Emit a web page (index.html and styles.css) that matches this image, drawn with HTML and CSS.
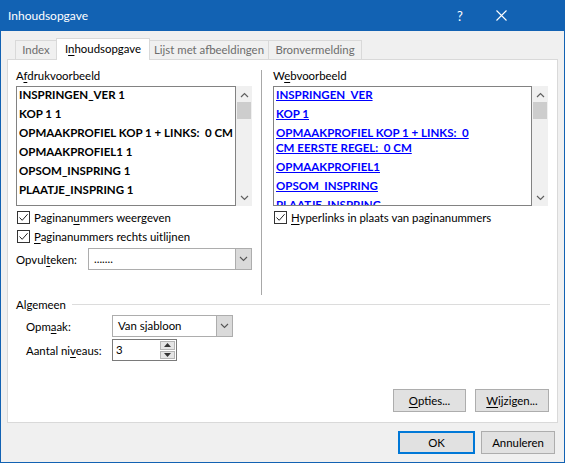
FILE: index.html
```html
<!DOCTYPE html>
<html lang="nl">
<head>
<meta charset="utf-8">
<title>Inhoudsopgave</title>
<link rel="stylesheet" href="styles.css">
</head>
<body>
<div class="window">
  <div class="titlebar">
    <span class="title">Inhoudsopgave</span>
    <span class="help">?</span>
    <svg class="close" width="11" height="11" viewBox="0 0 11 11"><path d="M0.5 0.5 L10.5 10.5 M10.5 0.5 L0.5 10.5" stroke="#fff" stroke-width="1.1" fill="none"/></svg>
  </div>
  <div class="body">
    <div class="tabs">
      <div class="tab tab-index">Index</div>
      <div class="tab tab-toc active">I<u>n</u>houdsopgave</div>
      <div class="tab tab-lijst">Lijst met afbeeldingen</div>
      <div class="tab tab-bron">Bronvermelding</div>
    </div>
    <div class="panel">
      <div class="columns">
        <div class="col col-left">
          <div class="label">A<u>f</u>drukvoorbeeld</div>
          <div class="preview">
            <div class="listbox listbox-left">
              <div class="item">INSPRINGEN_VER 1</div>
              <div class="item">KOP 1 1</div>
              <div class="item">OPMAAKPROFIEL KOP 1 + LINKS:&nbsp; 0 CM</div>
              <div class="item">OPMAAKPROFIEL1 1</div>
              <div class="item">OPSOM_INSPRING 1</div>
              <div class="item">PLAATJE_INSPRING 1</div>
              <div class="item">PREFIX VAN HET SJABLOON 1</div>
            </div>
            <div class="scrollbar">
              <svg class="sarrow" width="9" height="6" viewBox="0 0 9 6"><path d="M1 5 L4.5 1.5 L8 5" stroke="#606060" stroke-width="1.2" fill="none"/></svg>
              <div class="thumb"></div>
              <div class="track"></div>
              <svg class="sarrow" width="9" height="6" viewBox="0 0 9 6"><path d="M1 1 L4.5 4.5 L8 1" stroke="#606060" stroke-width="1.2" fill="none"/></svg>
            </div>
          </div>
          <div class="check">
            <span class="box"><svg width="11" height="11" viewBox="0 0 11 11"><path d="M1.5 5.5 L4.2 8.3 L9.6 2.2" stroke="#222" stroke-width="1" fill="none"/></svg></span>
            <span>Paginan<u>u</u>mmers weergeven</span>
          </div>
          <div class="check">
            <span class="box"><svg width="11" height="11" viewBox="0 0 11 11"><path d="M1.5 5.5 L4.2 8.3 L9.6 2.2" stroke="#222" stroke-width="1" fill="none"/></svg></span>
            <span><u>P</u>aginanummers rechts uitlijnen</span>
          </div>
          <div class="field">
            <span class="field-label">Opvul<u>t</u>eken:</span>
            <div class="combo combo-wide">
              <span class="combo-text">.......</span>
              <span class="combo-btn"><svg width="9" height="6" viewBox="0 0 9 6"><path d="M1 1 L4.5 4.5 L8 1" stroke="#555" stroke-width="1.1" fill="none"/></svg></span>
            </div>
          </div>
        </div>
        <div class="vsep"></div>
        <div class="col col-right">
          <div class="label">W<u>e</u>bvoorbeeld</div>
          <div class="preview">
            <div class="listbox listbox-right">
              <div class="item link">INSPRINGEN_VER</div>
              <div class="item link">KOP 1</div>
              <div class="item link">OPMAAKPROFIEL KOP 1 + LINKS:&nbsp; 0<br>CM EERSTE REGEL:&nbsp; 0 CM</div>
              <div class="item link">OPMAAKPROFIEL1</div>
              <div class="item link">OPSOM_INSPRING</div>
              <div class="item link">PLAATJE_INSPRING</div>
            </div>
            <div class="scrollbar">
              <svg class="sarrow" width="9" height="6" viewBox="0 0 9 6"><path d="M1 5 L4.5 1.5 L8 5" stroke="#606060" stroke-width="1.2" fill="none"/></svg>
              <div class="thumb"></div>
              <div class="track"></div>
              <svg class="sarrow" width="9" height="6" viewBox="0 0 9 6"><path d="M1 1 L4.5 4.5 L8 1" stroke="#606060" stroke-width="1.2" fill="none"/></svg>
            </div>
          </div>
          <div class="check">
            <span class="box"><svg width="11" height="11" viewBox="0 0 11 11"><path d="M1.5 5.5 L4.2 8.3 L9.6 2.2" stroke="#222" stroke-width="1" fill="none"/></svg></span>
            <span><u>H</u>yperlinks in plaats van paginanummers</span>
          </div>
        </div>
      </div>
      <div class="group">
        <div class="group-title"><span>Algemeen</span><div class="hline"></div></div>
        <div class="grow">
          <span class="grow-label">Opm<u>a</u>ak:</span>
          <div class="combo combo-mid">
            <span class="combo-text">Van sjabloon</span>
            <span class="combo-btn"><svg width="9" height="6" viewBox="0 0 9 6"><path d="M1 1 L4.5 4.5 L8 1" stroke="#555" stroke-width="1.1" fill="none"/></svg></span>
          </div>
        </div>
        <div class="grow">
          <span class="grow-label">Aantal ni<u>v</u>eaus:</span>
          <div class="spinner">
            <span class="spin-text">3</span>
            <span class="spin-btns">
              <span class="spin-btn"><svg width="7" height="4" viewBox="0 0 7 4"><path d="M0 4 L3.5 0 L7 4 Z" fill="#333"/></svg></span>
              <span class="spin-btn"><svg width="7" height="4" viewBox="0 0 7 4"><path d="M0 0 L3.5 4 L7 0 Z" fill="#333"/></svg></span>
            </span>
          </div>
        </div>
      </div>
      <div class="panel-buttons">
        <div class="btn btn-opties"><u>O</u>pties...</div>
        <div class="btn btn-wijzigen"><u>W</u>ijzigen...</div>
      </div>
    </div>
    <div class="dialog-buttons">
      <div class="btn btn-ok">OK</div>
      <div class="btn btn-cancel">Annuleren</div>
    </div>
  </div>
</div>
</body>
</html>
```
FILE: styles.css
```css
* { box-sizing: border-box; }
html, body { margin: 0; padding: 0; }
body {
  width: 565px;
  height: 463px;
  overflow: hidden;
  font-family: Lato, "Noto Sans", sans-serif;
  font-size: 11.4px;
  color: #000;
  background: #f0f0f0;
}
u { text-decoration: underline; text-underline-offset: 2px; }

.window {
  width: 565px;
  height: 463px;
  border: 1px solid #1262b3;
  border-top: none;
  background: #f0f0f0;
  display: flex;
  flex-direction: column;
}

.titlebar {
  height: 31px;
  margin: 0 -1px;
  background: #1262b3;
  color: #fff;
  display: flex;
  align-items: center;
  padding-left: 8px;
  font-size: 12px;
}
.title { flex: 1; }
.help { width: 10px; text-align: center; font-size: 13px; margin-right: 31px; }
.close { margin-right: 58px; }

.body {
  flex: 1;
  padding: 7px 6px 0 6px;
  display: flex;
  flex-direction: column;
}

.tabs {
  display: flex;
  align-items: flex-end;
  height: 21px;
  padding-left: 9px;
}
.tab {
  height: 19px;
  border: 1px solid #d9d9d9;
  border-bottom: none;
  margin-left: -1px;
  line-height: 17px;
  text-align: center;
  color: #6d6d6d;
  background: #f0f0f0;
}
.tab-index { width: 42px; }
.tab-toc { width: 94px; }
.tab-lijst { width: 120px; }
.tab-bron { width: 94px; }
.tab.active {
  height: 22px;
  margin-bottom: -1px;
  background: #fff;
  color: #000;
  position: relative;
  z-index: 1;
  line-height: 20px;
}

.panel {
  height: 364px;
  background: #fff;
  border: 1px solid #d9d9d9;
  display: flex;
  flex-direction: column;
}

.columns {
  display: flex;
  height: 235px;
  padding: 8px 7px 0 8px;
}
.col { display: flex; flex-direction: column; }
.col-left { width: 236px; }
.col-right { width: 275px; }
.vsep {
  width: 1px;
  background: #a8a8a8;
  margin: 2px 11px 0 9px;
}
.label { height: 16px; line-height: 16px; margin-bottom: 2px; }

.preview { display: flex; height: 120px; }
.listbox {
  border: 1px solid #828282;
  height: 120px;
  overflow: hidden;
  padding: 0 0 0 2px;
  font-family: Lato, "Noto Sans", sans-serif;
  font-weight: 700;
  font-size: 11.5px;
  white-space: nowrap;
}
.listbox-left { width: 220px; }
.listbox-right { width: 259px; }
.item { line-height: 15px; margin-bottom: 4px; }
.link { color: #0000ff; text-decoration: underline; text-underline-offset: 1px; }

.scrollbar {
  width: 16px;
  background: #f0f0f0;
  display: flex;
  flex-direction: column;
  align-items: center;
  padding: 6px 0 5px;
}
.sarrow { flex: none; }
.thumb {
  width: 14px;
  height: 17px;
  margin-top: 4px;
  background: #cdcdcd;
}
.track { flex: 1; }

.check {
  display: flex;
  align-items: center;
  height: 16px;
  margin-top: 3px;
}
.check + .check { margin-top: 3px; }
.box {
  width: 13px;
  height: 13px;
  border: 1px solid #333;
  background: #fff;
  margin: 0 4px 0 1px;
  display: flex;
}

.field {
  display: flex;
  align-items: center;
  margin-top: 4px;
}
.field-label { width: 72px; }

.combo {
  height: 22px;
  border: 1px solid #adadad;
  background: #fff;
  display: flex;
  align-items: stretch;
}
.combo-wide { width: 164px; }
.combo-mid { width: 121px; }
.combo-text { flex: 1; padding-left: 5px; line-height: 20px; }
.combo-btn {
  width: 16px;
  background: #dadada;
  border-left: 1px solid #adadad;
  display: flex;
  align-items: center;
  justify-content: center;
}

.group { padding: 1px 7px 0 8px; }
.group-title { display: flex; align-items: center; height: 16px; }
.hline { flex: 1; height: 1px; background: #dcdcdc; margin-left: 6px; }
.grow {
  display: flex;
  align-items: center;
  padding-left: 10px;
  margin-top: 3px;
}
.grow + .grow { margin-top: 2px; }
.grow-label { width: 86px; }

.spinner {
  width: 65px;
  height: 22px;
  border: 1px solid #7a7a7a;
  background: #fff;
  display: flex;
}
.spin-text { flex: 1; padding-left: 3px; line-height: 20px; }
.spin-btns {
  width: 16px;
  display: flex;
  flex-direction: column;
  padding: 1px 1px 1px 0;
  gap: 1px;
}
.spin-btn {
  flex: 1;
  background: #e5e5e5;
  border: 1px solid #b5b5b5;
  display: flex;
  align-items: center;
  justify-content: center;
}

.panel-buttons {
  margin-top: auto;
  display: flex;
  justify-content: flex-end;
  gap: 9px;
  padding: 0 8px 10px 0;
}
.btn {
  height: 23px;
  border: 1px solid #adadad;
  background: #e1e1e1;
  display: flex;
  align-items: center;
  justify-content: center;
}
.btn-opties { width: 73px; }
.btn-wijzigen { width: 74px; }

.dialog-buttons {
  display: flex;
  justify-content: flex-end;
  gap: 6px;
  margin-top: 8px;
  padding-right: 3px;
}
.btn-ok { width: 77px; border: 2px solid #0078d7; }
.btn-cancel { width: 74px; }
```
